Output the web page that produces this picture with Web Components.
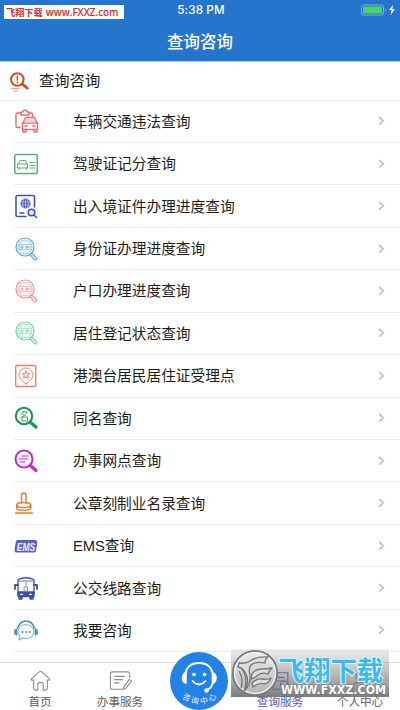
<!DOCTYPE html>
<html lang="zh-CN">
<head>
<meta charset="utf-8">
<title>查询咨询</title>
<style>
html,body{margin:0;height:100%;overflow:hidden}
body{font-family:"Liberation Sans","Noto Sans CJK SC",sans-serif;color:#1c1c1c;background:#fff}
</style>
</head>
<body>
<query-app></query-app>
<script>
const ICONS = {
accident:['#e8696e','<path d="M7 4H3.500Q2 4 2 5.500V17q0 1.500 1.500 1.500H6M15 4h2q1.500 0 1.500 1.500V8M7 3h2q.3-2 2-2t2 2h2v3H7zM9 14l2-4.500q.5-1 1.500-1h7q1 0 1.500 1l2 4.500M8.500 14h15v6.500h-15zM9 20.500V23h3v-2.500m8 0V23h3v-2.500M11 17h2m6 0h2"/><path d="M10.500 13.500 12 10h8l1.500 3.500z" fill="#f9d5d6" stroke="none"/>',1.4],
license:['#4fb57a','<rect x=".8" y="2.500" width="22.500" height="19" rx="1.500"/><path d="M4.500 12 6 8.500h5.500l1.500 3.500M4 12h9.500v4H4zM5 16v1.500m7.500-1.500v1.500M16 10.500h2m-2 3h5m-2-3h2m-5 3h5m-5 2.500h5" stroke-width="1"/>',1.5],
exit:['#4055b0','<path d="M12 22.500H3.500Q2 22.500 2 21V3q0-1.500 1.500-1.500h15Q20.500 1.500 20.500 3v10M6 19h4"/><circle cx="11.500" cy="9.500" r="5" fill="#4055b0" stroke="none"/><path d="M7 8h9m-9 3h9M11.500 5v9m-2-9q-2 4.500 0 9m4-9q2 4.500 0 9" stroke="#e3e8fa" stroke-width=".6"/><circle cx="17.500" cy="18.500" r="3.300" fill="#dfe3f6"/><path d="m20 21 2.500 2.500"/>',1.6],
lens:['currentColor','<circle cx="11" cy="10" r="9"/><circle cx="11" cy="10" r="7" stroke-width=".6" fill="currentColor" fill-opacity=".12"/><path d="M5 7.500h12M5 12.500h12" stroke-width=".5"/><path d="M6 10h3.500m2 0h4.500M8 9v2.500m5-2.500v2.500" stroke-width=".8"/><path d="m16 17.500 1.700-1.500 4.800 5q.5 1.200-.8 1.800-1 .3-1.700-.5z"/>',1.2],
place:['#e8815e','<rect x="1.700" y="1.500" width="20" height="21" rx="1.500"/><path d="M12 20q-7-5-7-9a7 7 0 0 1 14 0q0 4-7 9z" stroke-width=".9"/><path d="m12 7 1.200 2.200 2.600.5-1.800 1.900.3 2.600-2.300-1.100-2.300 1.100.3-2.600-1.800-1.900 2.600-.5z" fill="#f8d3c5" stroke-width=".9"/>',1.4],
name:['#1f9653','<circle cx="10" cy="10" r="8.200"/><path d="m16.500 16.500 5.500 4.500" stroke-width="3.500"/><path d="M10 5 7 8.500M9 6h4q-1 4-6.500 6M8.500 8l2 1.500M8.500 11h5v4h-5z" stroke-width=".8"/>',2.1],
network:['#c62bd0','<circle cx="10" cy="10" r="8.500"/><path d="m16.500 16.500 5.500 5" stroke-width="3.200"/><path d="M8 7h6M5 10h9m-8 3h5" stroke-width="1.200"/>',2],
stamp:['#eb7b36','<path d="M7.500 12V4.500Q7.500 2 9.700 2T12 4.500V12"/><ellipse cx="9.700" cy="14" rx="7" ry="2.500"/><path d="M2.700 14v3q0 2.300 7 2.300t7-2.300v-3M1.500 22h17"/>',1.5],
ems:['#5559c2','<path d="M3.500 6.500H21.500Q23 6.500 22.800 8L21.500 17Q21.300 18 20 18H2Q.8 18 1 16.800L2.300 8Q2.500 6.500 3.500 6.500z" fill="#5f63ca"/><text x="2.800" y="16.500" textLength="18.500" lengthAdjust="spacingAndGlyphs" font-family="Liberation Sans,sans-serif" font-size="11.500" font-style="italic" font-weight="700" fill="#edeeff" stroke="none">EMS</text>',1],
bus:['#3c50ad','<path d="M4 3.500q8-3.500 16 0V18H4z" fill="#fff"/><path d="M4 16h16v4.500H4z" fill="#3c50ad"/><path d="M5 20v3h3v-3m8 0v3h3v-3" fill="#3c50ad"/><path d="M5 5h14" stroke-width=".8"/><path d="M4 9H1v4m19-4h3v4" stroke-width="1.800"/><path d="M12 6v5m-1.500 0h3v4h-3z" stroke="#8290ca" stroke-width="1"/><path d="M6.500 18.300h2m7 0h2" stroke="#fff" stroke-width="1.300"/>',1.3],
talk:['#4a8bb4','<path d="M3.500 10Q6 3 12 3T20.500 10"/><path d="M5 22 5.500 18Q4 16.500 4 13.500 5 6.500 12 6.500q8 1 8 7.500-1 6.500-8 6.500-2 0-3.500-.6z" stroke="#7bbcd5" stroke-width="1.200"/><path d="M2.500 11v6m-1.500-5v4M21.500 11v6m1.500-5v4" stroke-width="1.500"/><path d="M8 14h1m2.500 0h1m2.500 0h1"/>',1.4],
search:['#db4b25','<circle cx="10" cy="9" r="7.500"/><path d="m16 14.500 6 5" stroke-width="3.300"/><path d="M10 5v4.500m0 2.500V13" stroke-width="1.700"/><path d="M3 20h9M5.500 23h5" stroke-width="1.200" stroke="#e99776"/>',2.5],
home:['#8d8d8d','<path d="M4.500 11H2.200q-.8-.8 0-1.600L11 1.800q1-.8 2 0l8.800 7.600q.8.8 0 1.600h-2.300v9q0 2-2 2H15v-6q0-2.500-3-2.500T9 16v6H6.500q-2 0-2-2z"/>',1.2],
edit:['#8d8d8d','<path d="M14 21H3q-2 0-2-2V4q0-2 2-2h17q2 0 2 2v4M5.500 7H16M5.500 10.500H14M5.500 14h5m4.500 7 .8-3.200 6-7.500 2.200 1.800-6 7.600z"/>',1.2],
query:['#5355d9','<path d="M4 3h16v18H4zM8 8h8m-8 4h8"/><circle cx="16" cy="16" r="4"/><path d="m19 19 3 3"/>',1.3],
user:['#777','<circle cx="12" cy="7" r="5"/><path d="M3 22q0-9 9-9t9 9"/>',1.3]
};
class LineIcon extends HTMLElement{
 connectedCallback(){
  const [c,p,w]=ICONS[this.getAttribute('name')];
  this.attachShadow({mode:'open'}).innerHTML=`<style>:host{display:block;width:24px;height:24px}svg{display:block;width:100%;height:100%;overflow:visible}</style><svg viewBox="0 0 24 24" fill="none" stroke="${c}" stroke-width="${w}" stroke-linejoin="round" stroke-linecap="round">${p}</svg>`;
 }
}
customElements.define('line-icon',LineIcon);

class StatusHeader extends HTMLElement{
 connectedCallback(){
  this.attachShadow({mode:'open'}).innerHTML=`<style>
  :host{display:block;height:62px;box-sizing:border-box;background:#2575cd;color:#fff;border-bottom:1px solid #a5d2fa}
  .status{height:20px;display:grid;grid-template-columns:1fr 60px 1fr;align-items:center}
  .brand{justify-self:start;margin:4px 0 0 4px;width:120px;height:14px;background:#fff;color:#d72b2b;display:flex;white-space:nowrap;box-sizing:border-box;padding-left:2px;gap:3px}
  .brand b{font:700 9.200px/15px "Noto Sans CJK SC",sans-serif}.brand i{font:normal 600 9.800px/15px "Open Sans",sans-serif}
  .time{font:500 11.700px/20px Inter,sans-serif;text-align:center;white-space:nowrap;letter-spacing:.1px;padding-left:2px}
  .power{justify-self:end;margin-right:4px;display:block}
  h1{margin:0;font:500 16.500px/42px "Noto Sans CJK SC",sans-serif;text-align:center}
  </style><div class="status"><div class="brand"><b>飞翔下载</b><i>www.FXXZ.com</i></div><div class="time">5:38 PM</div><svg class="power" width="36" height="14" viewBox="0 0 36 14"><rect x="1.500" y="2" width="22" height="10" rx="2" fill="none" stroke="#7eb0cd"/><rect x="3" y="3.500" width="19" height="7" rx="1" fill="#4bd465"/><path d="M25 5q2 2 0 4" fill="#7eb0cd"/><path d="m33 2-4 5h2.500L30.500 12 35 6.300h-2.700z" fill="#fff"/></svg></div><h1>查询咨询</h1>`;
 }
}
customElements.define('status-header',StatusHeader);

class SectionTitle extends HTMLElement{
 connectedCallback(){
  this.attachShadow({mode:'open'}).innerHTML=`<style>:host{display:flex;height:38.500px;box-sizing:border-box;border-bottom:1px solid #eee;align-items:center;padding-left:9px;gap:10px;font-size:15.300px}line-icon{width:20px;height:20px;margin-top:2px}span{line-height:20px}</style><line-icon name="search"></line-icon><span><slot></slot></span>`;
 }
}
customElements.define('section-title',SectionTitle);

class QueryRow extends HTMLElement{
 connectedCallback(){
  this.attachShadow({mode:'open'}).innerHTML=`<style>:host{display:grid;grid-template-columns:59px 1fr 7px;align-items:center;height:42.450px;margin-left:14px;padding-right:15px;box-sizing:border-box;border-bottom:1px solid #ececec;font-size:14.700px}
  span{line-height:20px;white-space:nowrap;padding-top:1px}svg{display:block}line-icon{color:${this.getAttribute('tone')||'#333'}}</style><line-icon name="${this.getAttribute('icon')}"></line-icon><span><slot></slot></span><svg width="7" height="10" viewBox="0 0 7 10" fill="none" stroke="#c4c4c4" stroke-width="1.800"><path d="m1.200 1 4 3.800-4 3.800"/></svg>`;
 }
}
customElements.define('query-row',QueryRow);

class TabItem extends HTMLElement{
 connectedCallback(){
  this.attachShadow({mode:'open'}).innerHTML=`<style>:host{display:flex;flex-direction:column;align-items:center;font-size:11.600px;color:#606060;padding-top:7px;box-sizing:border-box}:host([active]){color:#5557dc}line-icon{width:23px;height:22px}span{line-height:16px;margin-top:2px;white-space:nowrap}</style><line-icon name="${this.getAttribute('icon')}"></line-icon><span><slot></slot></span>`;
 }
}
customElements.define('tab-item',TabItem);

class ServiceButton extends HTMLElement{
 connectedCallback(){
  this.attachShadow({mode:'open'}).innerHTML=`<style>:host{display:block;width:58px;height:58px}svg{display:block}</style><svg width="58" height="58" viewBox="0 0 58 58"><circle cx="29" cy="29" r="29" fill="#2481e5"/><g fill="none" stroke="#fff" stroke-linecap="round"><path d="M15 23Q17 11 29 11T43 23" stroke-width="2"/><path d="M16 21v10q-3.500-.5-3.500-5t3.500-5M42.500 21v10q3.500-.5 3.500-5t-3.500-5" fill="#fff" stroke-width="1.500"/><path d="M43 30q-1 6-6 8" stroke-width="1.700"/><path d="M22.500 29q6.500 7 13 0" stroke-width="1.800"/></g><g fill="#fff"><circle cx="24" cy="22.500" r="1.800"/><circle cx="34.500" cy="22.500" r="1.800"/><circle cx="36.500" cy="38.500" r="2.300"/></g><g fill="#edf6ff" font-family="Noto Sans CJK SC,sans-serif" font-size="8" text-anchor="middle"><text transform="translate(15.500 48) rotate(24)">咨</text><text transform="translate(24.500 51.500) rotate(9)">询</text><text transform="translate(34.500 51.500) rotate(-9)">中</text><text transform="translate(43.500 48) rotate(-24)">心</text></g></svg>`;
 }
}
customElements.define('service-button',ServiceButton);

class SiteMark extends HTMLElement{
 connectedCallback(){
  this.attachShadow({mode:'open'}).innerHTML=`<style>:host{display:block;width:158px;height:48px}svg{display:block;overflow:visible}</style><svg width="158" height="48" viewBox="0 0 158 48"><defs><linearGradient id="shade" x2="0" y2="1"><stop stop-color="#777" stop-opacity=".12"/><stop offset=".5" stop-color="#777" stop-opacity=".5"/><stop offset="1" stop-color="#707070" stop-opacity=".92"/></linearGradient><linearGradient id="ring" x2="0" y2="1"><stop stop-color="#ededed"/><stop offset="1" stop-color="#b4b4b4"/></linearGradient></defs><rect width="158" height="48" fill="url(#shade)"/>
  <circle cx="24" cy="24" r="22" fill="url(#ring)" stroke="#777" stroke-width="2"/><circle cx="24" cy="24" r="20.500" fill="none" stroke="#eee" stroke-width="1.500"/>
  <g fill="#dedede" stroke="#777" stroke-width="1.300" stroke-linejoin="round"><path d="M13 42Q19 33 15 25 12 19 7 18L8 14q7 1 11-2 7-5 18-4-3 2-3 6-9-2-14 2-3 4-1 10 1 10-6 16z"/><path d="M21 25q3-5 10-5 5 0 10-1-3 3-4 6-6-2-10 1-3 3-7 4zM21 34q5-5 10-4 5 1 9-1-2 5-7 6-4-2-11 3z"/><path d="M8 22q5 8 2 17M11 20q6 8 3 20" fill="none"/></g>
  <text x="47" y="32" textLength="105" lengthAdjust="spacingAndGlyphs" font-family="Noto Sans CJK SC,sans-serif" font-size="27" font-weight="700" fill="#3eb9eb" stroke="#e4faff" stroke-width="1.800" paint-order="stroke">飞翔下载</text>
  <text x="50" y="45" textLength="105" lengthAdjust="spacingAndGlyphs" font-family="DejaVu Sans,sans-serif" font-size="11.500" font-weight="700" fill="#fff" stroke="#777" stroke-width=".8" paint-order="stroke">WWW.FXXZ.COM</text></svg>`;
 }
}
customElements.define('site-mark',SiteMark);

class QueryApp extends HTMLElement{
 connectedCallback(){
  const rows=[['accident','车辆交通违法查询'],['license','驾驶证记分查询'],['exit','出入境证件办理进度查询'],['lens','身份证办理进度查询','#60a7df'],['lens','户口办理进度查询','#ef8e92'],['lens','居住登记状态查询','#6fd2a1'],['place','港澳台居民居住证受理点'],['name','同名查询'],['network','办事网点查询'],['stamp','公章刻制业名录查询'],['ems','EMS查询'],['bus','公交线路查询'],['talk','我要咨询']];
  this.attachShadow({mode:'open'}).innerHTML=`<style>
  :host{display:flex;flex-direction:column;position:relative;width:400px;height:710px;overflow:hidden;background:#fff}
  main{display:flex;flex-direction:column;height:600px;flex:none}section-title,query-row{flex:none}
  nav{height:48px;box-sizing:border-box;border-top:1px solid #ddd;display:grid;grid-template-columns:repeat(5,1fr)}
  service-button{position:absolute;left:170px;top:652px}site-mark{position:absolute;left:231px;top:649px}
  </style><status-header></status-header><main><section-title>查询咨询</section-title>${rows.map(r=>`<query-row icon="${r[0]}" tone="${r[2]||''}">${r[1]}</query-row>`).join('')}</main><nav><tab-item icon="home">首页</tab-item><tab-item icon="edit">办事服务</tab-item><i></i><tab-item active icon="query">查询服务</tab-item><tab-item icon="user">个人中心</tab-item></nav><service-button></service-button><site-mark></site-mark>`;
 }
}
customElements.define('query-app',QueryApp);
</script>
</body>
</html>
